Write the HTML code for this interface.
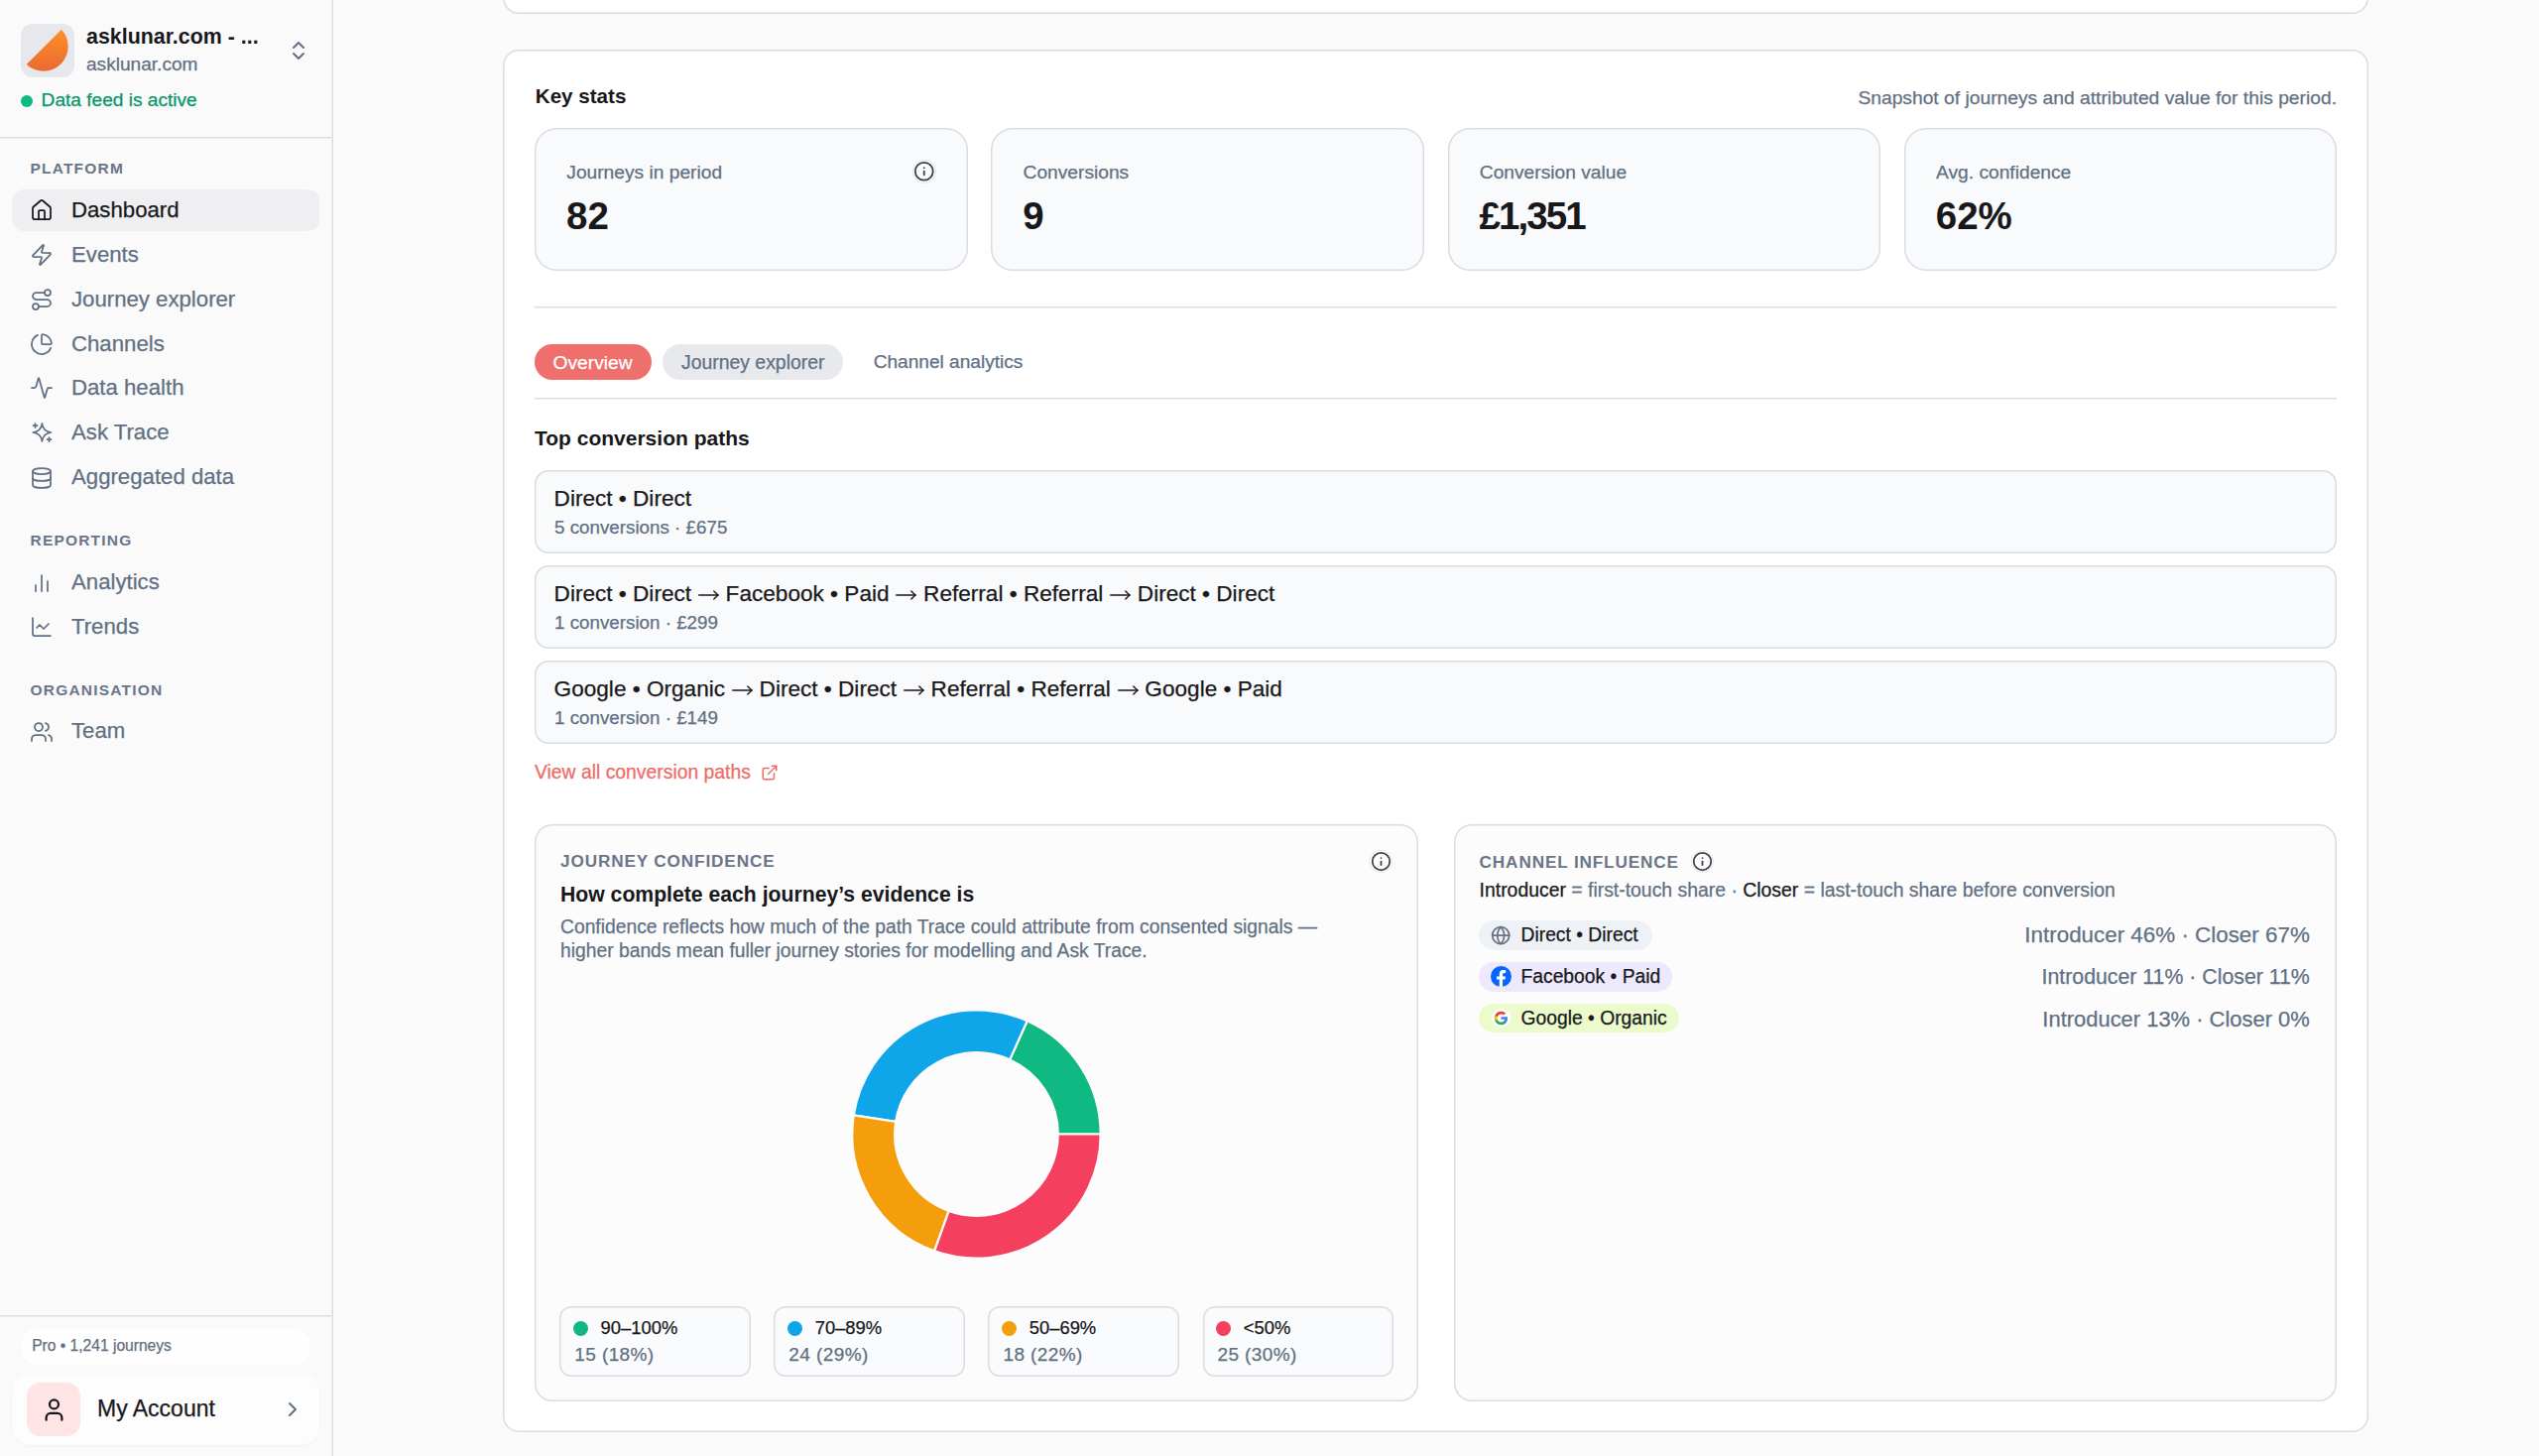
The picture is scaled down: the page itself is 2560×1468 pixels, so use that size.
<!DOCTYPE html>
<html><head><meta charset="utf-8"><title>Dashboard</title>
<style>
html,body{margin:0;padding:0;}
body{width:2560px;height:1468px;overflow:hidden;position:relative;background:#fafafa;font-family:"Liberation Sans",sans-serif;}
.t{position:absolute;white-space:nowrap;-webkit-text-stroke:0.25px currentColor;}
.t.bd{-webkit-text-stroke:0;}
.b{position:absolute;box-sizing:border-box;}
.i{position:absolute;overflow:visible;}
</style></head><body>
<div class="b" style="left:0px;top:0px;width:335.5px;height:1468px;background:#fafafa;box-shadow:inset -1.5px 0 0 0 #d9dde2;"></div>
<div class="b" style="left:21px;top:24px;width:54px;height:54px;background:#e7e8ec;border-radius:12px;"></div>
<svg class="i" style="left:21px;top:24px" width="54" height="54" viewBox="0 0 54 54"><defs><linearGradient id="lg" x1="0" y1="0" x2="0" y2="1"><stop offset="0" stop-color="#ff8f2b"/><stop offset="1" stop-color="#ea6a30"/></linearGradient></defs><path d="M5.7 40.9 L40.9 5.7 A24.9 24.9 0 0 1 5.7 40.9 Z" fill="url(#lg)"/></svg>
<div class="t bd" style="left:87px;top:25.14px;font-size:21.4px;line-height:25.68px;color:#18181b;font-weight:700;">asklunar.com - ...</div>
<div class="t" style="left:87px;top:54.02px;font-size:19.1px;line-height:22.92px;color:#617083;">asklunar.com</div>
<svg class="i" style="left:289px;top:39px;" width="24" height="24" viewBox="0 0 24 24" fill="none" stroke="#617083" stroke-width="2" stroke-linecap="round" stroke-linejoin="round"><path d="m7 15 5 5 5-5"/><path d="m7 9 5-5 5 5"/></svg>
<div class="b" style="left:21px;top:96px;width:12px;height:12px;background:#10b981;border-radius:50%;"></div>
<div class="t" style="left:41.6px;top:90.22px;font-size:19.1px;line-height:22.92px;color:#059669;">Data feed is active</div>
<div class="b" style="left:0px;top:138px;width:334px;height:6px;box-shadow:inset 0 1.5px 0 0 #d9dde2;"></div>
<div class="t bd" style="left:30.5px;top:161.03px;font-size:15.5px;line-height:18.6px;color:#6a7588;font-weight:700;letter-spacing:1.2px;">PLATFORM</div>
<div class="b" style="left:12px;top:191px;width:310px;height:42px;background:#efeff1;border-radius:12px;"></div>
<svg class="i" style="left:29.5px;top:200.2px;" width="24" height="24" viewBox="0 0 24 24" fill="none" stroke="#18181b" stroke-width="1.75" stroke-linecap="round" stroke-linejoin="round"><path d="M15 21v-8a1 1 0 0 0-1-1h-4a1 1 0 0 0-1 1v8"/><path d="M3 10a2 2 0 0 1 .709-1.528l7-5.999a2 2 0 0 1 2.582 0l7 5.999A2 2 0 0 1 21 10v9a2 2 0 0 1-2 2H5a2 2 0 0 1-2-2z"/></svg>
<div class="t" style="left:72px;top:199.19px;font-size:22.2px;line-height:26.64px;color:#18181b;">Dashboard</div>
<svg class="i" style="left:29.5px;top:245.2px;" width="24" height="24" viewBox="0 0 24 24" fill="none" stroke="#617083" stroke-width="1.75" stroke-linecap="round" stroke-linejoin="round"><path d="M4 14a1 1 0 0 1-.78-1.63l9.9-10.2a.5.5 0 0 1 .86.46l-1.92 6.02A1 1 0 0 0 13 10h7a1 1 0 0 1 .78 1.63l-9.9 10.2a.5.5 0 0 1-.86-.46l1.92-6.02A1 1 0 0 0 11 14z"/></svg>
<div class="t" style="left:72px;top:244.19px;font-size:22.2px;line-height:26.64px;color:#617083;">Events</div>
<svg class="i" style="left:29.5px;top:289.7px;" width="24" height="24" viewBox="0 0 24 24" fill="none" stroke="#617083" stroke-width="1.75" stroke-linecap="round" stroke-linejoin="round"><circle cx="6" cy="19" r="3"/><path d="M9 19h8.5a3.5 3.5 0 0 0 0-7h-11a3.5 3.5 0 0 1 0-7H15"/><circle cx="18" cy="5" r="3"/></svg>
<div class="t" style="left:72px;top:288.69px;font-size:22.2px;line-height:26.64px;color:#617083;">Journey explorer</div>
<svg class="i" style="left:29.5px;top:334.9px;" width="24" height="24" viewBox="0 0 24 24" fill="none" stroke="#617083" stroke-width="1.75" stroke-linecap="round" stroke-linejoin="round"><path d="M21 12c.552 0 1.005-.449.95-.998a10 10 0 0 0-8.953-8.951c-.55-.055-.998.398-.998.95v8a1 1 0 0 0 1 1z"/><path d="M21.21 15.89A10 10 0 1 1 8 2.83"/></svg>
<div class="t" style="left:72px;top:333.89px;font-size:22.2px;line-height:26.64px;color:#617083;">Channels</div>
<svg class="i" style="left:29.5px;top:379.4px;" width="24" height="24" viewBox="0 0 24 24" fill="none" stroke="#617083" stroke-width="1.75" stroke-linecap="round" stroke-linejoin="round"><path d="M22 12h-2.48a2 2 0 0 0-1.93 1.46l-2.35 8.36a.25.25 0 0 1-.48 0L9.24 2.18a.25.25 0 0 0-.48 0l-2.35 8.36A2 2 0 0 1 4.49 12H2"/></svg>
<div class="t" style="left:72px;top:378.39px;font-size:22.2px;line-height:26.64px;color:#617083;">Data health</div>
<svg class="i" style="left:29.5px;top:424.3px;" width="24" height="24" viewBox="0 0 24 24" fill="none" stroke="#617083" stroke-width="1.75" stroke-linecap="round" stroke-linejoin="round"><path d="M12.4 3 C13.1 8.6 15.6 11.2 21.4 12 C15.6 12.8 13.1 15.4 12.4 21 C11.7 15.4 9.2 12.8 3.3 12 C9.2 11.2 11.7 8.6 12.4 3 Z"/><path d="M5.5 3.1v4"/><path d="M3.5 5.1h4"/><path d="M19.5 17v4"/><path d="M17.5 19h4"/></svg>
<div class="t" style="left:72px;top:423.29px;font-size:22.2px;line-height:26.64px;color:#617083;">Ask Trace</div>
<svg class="i" style="left:29.5px;top:469.5px;" width="24" height="24" viewBox="0 0 24 24" fill="none" stroke="#617083" stroke-width="1.75" stroke-linecap="round" stroke-linejoin="round"><ellipse cx="12" cy="5" rx="9" ry="3"/><path d="M3 5V19A9 3 0 0 0 21 19V5"/><path d="M3 12A9 3 0 0 0 21 12"/></svg>
<div class="t" style="left:72px;top:468.49px;font-size:22.2px;line-height:26.64px;color:#617083;">Aggregated data</div>
<div class="t bd" style="left:30.5px;top:536.13px;font-size:15.5px;line-height:18.6px;color:#6a7588;font-weight:700;letter-spacing:1.2px;">REPORTING</div>
<svg class="i" style="left:29.5px;top:575.5px;" width="24" height="24" viewBox="0 0 24 24" fill="none" stroke="#617083" stroke-width="1.75" stroke-linecap="round" stroke-linejoin="round"><line x1="18" x2="18" y1="20" y2="10"/><line x1="12" x2="12" y1="20" y2="4"/><line x1="6" x2="6" y1="20" y2="14"/></svg>
<div class="t" style="left:72px;top:574.49px;font-size:22.2px;line-height:26.64px;color:#617083;">Analytics</div>
<svg class="i" style="left:29.5px;top:619.6px;" width="24" height="24" viewBox="0 0 24 24" fill="none" stroke="#617083" stroke-width="1.75" stroke-linecap="round" stroke-linejoin="round"><path d="M3 3v16a2 2 0 0 0 2 2h16"/><path d="m19 9-5 5-4-4-3 3"/></svg>
<div class="t" style="left:72px;top:618.59px;font-size:22.2px;line-height:26.64px;color:#617083;">Trends</div>
<div class="t bd" style="left:30.5px;top:686.93px;font-size:15.5px;line-height:18.6px;color:#6a7588;font-weight:700;letter-spacing:1.2px;">ORGANISATION</div>
<svg class="i" style="left:29.5px;top:725.5px;" width="24" height="24" viewBox="0 0 24 24" fill="none" stroke="#617083" stroke-width="1.75" stroke-linecap="round" stroke-linejoin="round"><path d="M16 21v-2a4 4 0 0 0-4-4H6a4 4 0 0 0-4 4v2"/><circle cx="9" cy="7" r="4"/><path d="M22 21v-2a4 4 0 0 0-3-3.87"/><path d="M16 3.13a4 4 0 0 1 0 7.75"/></svg>
<div class="t" style="left:72px;top:724.49px;font-size:22.2px;line-height:26.64px;color:#617083;">Team</div>
<div class="b" style="left:0px;top:1326px;width:334px;height:6px;box-shadow:inset 0 1.5px 0 0 #d9dde2;"></div>
<div class="b" style="left:21px;top:1339px;width:292px;height:37px;background:#fefefe;border-radius:16px;box-shadow:0 0 2px rgba(0,0,0,0.03);"></div>
<div class="t" style="left:32.2px;top:1347.93px;font-size:15.6px;line-height:18.72px;color:#617083;">Pro • 1,241 journeys</div>
<div class="b" style="left:12px;top:1385px;width:310px;height:72px;background:#fdfdfd;border-radius:18px;box-shadow:0 1px 3px rgba(0,0,0,0.04);"></div>
<div class="b" style="left:27px;top:1394px;width:54px;height:54px;background:#ffe4e6;border-radius:14px;"></div>
<svg class="i" style="left:40.5px;top:1407.5px;" width="27" height="27" viewBox="0 0 24 24" fill="none" stroke="#18181b" stroke-width="2" stroke-linecap="round" stroke-linejoin="round"><path d="M19 21v-2a4 4 0 0 0-4-4H9a4 4 0 0 0-4 4v2"/><circle cx="12" cy="7" r="4"/></svg>
<div class="t" style="left:98px;top:1407.23px;font-size:23px;line-height:27.6px;color:#18181b;">My Account</div>
<svg class="i" style="left:283px;top:1409px;" width="24" height="24" viewBox="0 0 24 24" fill="none" stroke="#617083" stroke-width="2" stroke-linecap="round" stroke-linejoin="round"><path d="m9 18 6-6-6-6"/></svg>
<div class="b" style="left:507px;top:-40px;width:1881px;height:54px;background:#fff;box-shadow:inset 0 0 0 1.5px #d9dde2;border-radius:16px;"></div>
<div class="b" style="left:507px;top:50px;width:1881px;height:1394px;background:#fff;box-shadow:inset 0 0 0 1.5px #d9dde2;border-radius:16px;"></div>
<div class="t bd" style="left:539.8px;top:85.20px;font-size:20.6px;line-height:24.72px;color:#18181b;font-weight:700;">Key stats</div>
<div class="t" style="right:204px;top:86.77px;font-size:19.26px;line-height:23.112px;color:#617083;">Snapshot of journeys and attributed value for this period.</div>
<div class="b" style="left:539.0px;top:129px;width:436.5px;height:144px;background:#f9fafb;box-shadow:inset 0 0 0 1.5px #d9dde2;border-radius:22px;"></div>
<div class="t" style="left:571.3px;top:161.53px;font-size:19.2px;line-height:23.04px;color:#617083;">Journeys in period</div>
<div class="t bd" style="left:571.0px;top:194.96px;font-size:38.5px;line-height:46.2px;color:#18181b;font-weight:700;">82</div>
<div class="b" style="left:999.25px;top:129px;width:436.5px;height:144px;background:#f9fafb;box-shadow:inset 0 0 0 1.5px #d9dde2;border-radius:22px;"></div>
<div class="t" style="left:1031.55px;top:161.53px;font-size:19.2px;line-height:23.04px;color:#617083;">Conversions</div>
<div class="t bd" style="left:1031.25px;top:194.96px;font-size:38.5px;line-height:46.2px;color:#18181b;font-weight:700;">9</div>
<div class="b" style="left:1459.5px;top:129px;width:436.5px;height:144px;background:#f9fafb;box-shadow:inset 0 0 0 1.5px #d9dde2;border-radius:22px;"></div>
<div class="t" style="left:1491.8px;top:161.53px;font-size:19.2px;line-height:23.04px;color:#617083;">Conversion value</div>
<div class="t bd" style="left:1491.5px;top:194.96px;font-size:38.5px;line-height:46.2px;color:#18181b;font-weight:700;letter-spacing:-1.9px;">£1,351</div>
<div class="b" style="left:1919.75px;top:129px;width:436.5px;height:144px;background:#f9fafb;box-shadow:inset 0 0 0 1.5px #d9dde2;border-radius:22px;"></div>
<div class="t" style="left:1952.05px;top:161.53px;font-size:19.2px;line-height:23.04px;color:#617083;">Avg. confidence</div>
<div class="t bd" style="left:1951.75px;top:194.96px;font-size:38.5px;line-height:46.2px;color:#18181b;font-weight:700;">62%</div>
<div class="b" style="left:920.2px;top:161.2px;width:23.5px;height:23.5px;border-radius:50%;border:1px solid #e4e7eb;"></div>
<svg class="i" style="left:921.2px;top:162.2px;" width="21.5" height="21.5" viewBox="0 0 24 24" fill="none" stroke="#3f3f46" stroke-width="2" stroke-linecap="round" stroke-linejoin="round"><circle cx="12" cy="12" r="10"/><path d="M12 16v-4"/><path d="M12 8h.01"/></svg>
<div class="b" style="left:539px;top:309px;width:1817px;height:6px;box-shadow:inset 0 1.5px 0 0 #d9dde2;"></div>
<div class="b" style="left:539px;top:347px;width:117.5px;height:35.5px;background:#ee6f6c;border-radius:18px;"></div>
<div class="t" style="left:557.6px;top:353.73px;font-size:19.2px;line-height:23.04px;color:#ffffff;">Overview</div>
<div class="b" style="left:668.4px;top:347px;width:181.6px;height:35.5px;background:#e8e9ed;border-radius:18px;"></div>
<div class="t" style="left:687px;top:353.54px;font-size:19.4px;line-height:23.28px;color:#617083;">Journey explorer</div>
<div class="t" style="left:880.7px;top:353.82px;font-size:19.1px;line-height:22.92px;color:#617083;">Channel analytics</div>
<div class="b" style="left:539px;top:401px;width:1817px;height:6px;box-shadow:inset 0 1.5px 0 0 #d9dde2;"></div>
<div class="t bd" style="left:539px;top:429.02px;font-size:21px;line-height:25.2px;color:#18181b;font-weight:700;">Top conversion paths</div>
<div class="b" style="left:539px;top:473.5px;width:1817px;height:84.3px;background:#f9fafb;box-shadow:inset 0 0 0 1.5px #d9dde2;border-radius:14px;"></div>
<div class="t" style="left:558.6px;top:488.51px;font-size:22.6px;line-height:27.12px;color:#18181b;">Direct • Direct</div>
<div class="t" style="left:559px;top:520.91px;font-size:18.8px;line-height:22.56px;color:#617083;">5 conversions · £675</div>
<div class="b" style="left:539px;top:569.5px;width:1817px;height:84.3px;background:#f9fafb;box-shadow:inset 0 0 0 1.5px #d9dde2;border-radius:14px;"></div>
<div class="t" style="left:558.6px;top:584.51px;font-size:22.6px;line-height:27.12px;color:#18181b;">Direct • Direct <svg style="display:inline-block;vertical-align:1px;margin:0 0.5px" width="21" height="10" viewBox="0 0 21 10" fill="none" stroke="#18181b" stroke-width="1.4" stroke-linecap="round" stroke-linejoin="round"><path d="M0.7 5h19.4"/><path d="M15.8 1l4.2 4-4.2 4"/></svg> Facebook • Paid <svg style="display:inline-block;vertical-align:1px;margin:0 0.5px" width="21" height="10" viewBox="0 0 21 10" fill="none" stroke="#18181b" stroke-width="1.4" stroke-linecap="round" stroke-linejoin="round"><path d="M0.7 5h19.4"/><path d="M15.8 1l4.2 4-4.2 4"/></svg> Referral • Referral <svg style="display:inline-block;vertical-align:1px;margin:0 0.5px" width="21" height="10" viewBox="0 0 21 10" fill="none" stroke="#18181b" stroke-width="1.4" stroke-linecap="round" stroke-linejoin="round"><path d="M0.7 5h19.4"/><path d="M15.8 1l4.2 4-4.2 4"/></svg> Direct • Direct</div>
<div class="t" style="left:559px;top:616.91px;font-size:18.8px;line-height:22.56px;color:#617083;">1 conversion · £299</div>
<div class="b" style="left:539px;top:665.5px;width:1817px;height:84.3px;background:#f9fafb;box-shadow:inset 0 0 0 1.5px #d9dde2;border-radius:14px;"></div>
<div class="t" style="left:558.6px;top:680.51px;font-size:22.6px;line-height:27.12px;color:#18181b;">Google • Organic <svg style="display:inline-block;vertical-align:1px;margin:0 0.5px" width="21" height="10" viewBox="0 0 21 10" fill="none" stroke="#18181b" stroke-width="1.4" stroke-linecap="round" stroke-linejoin="round"><path d="M0.7 5h19.4"/><path d="M15.8 1l4.2 4-4.2 4"/></svg> Direct • Direct <svg style="display:inline-block;vertical-align:1px;margin:0 0.5px" width="21" height="10" viewBox="0 0 21 10" fill="none" stroke="#18181b" stroke-width="1.4" stroke-linecap="round" stroke-linejoin="round"><path d="M0.7 5h19.4"/><path d="M15.8 1l4.2 4-4.2 4"/></svg> Referral • Referral <svg style="display:inline-block;vertical-align:1px;margin:0 0.5px" width="21" height="10" viewBox="0 0 21 10" fill="none" stroke="#18181b" stroke-width="1.4" stroke-linecap="round" stroke-linejoin="round"><path d="M0.7 5h19.4"/><path d="M15.8 1l4.2 4-4.2 4"/></svg> Google • Paid</div>
<div class="t" style="left:559px;top:712.91px;font-size:18.8px;line-height:22.56px;color:#617083;">1 conversion · £149</div>
<div class="t" style="left:539px;top:767.19px;font-size:19.35px;line-height:23.22px;color:#ee6b67;">View all conversion paths</div>
<svg class="i" style="left:767px;top:770.3px;" width="18" height="18" viewBox="0 0 24 24" fill="none" stroke="#ee6b67" stroke-width="2" stroke-linecap="round" stroke-linejoin="round"><path d="M15 3h6v6"/><path d="M10 14 21 3"/><path d="M18 13v6a2 2 0 0 1-2 2H5a2 2 0 0 1-2-2V8a2 2 0 0 1 2-2h6"/></svg>
<div class="b" style="left:539px;top:830.5px;width:890.5px;height:582px;background:#fcfcfd;box-shadow:inset 0 0 0 1.5px #d9dde2;border-radius:18px;"></div>
<div class="b" style="left:1465.5px;top:830.5px;width:890.5px;height:582px;background:#fcfcfd;box-shadow:inset 0 0 0 1.5px #d9dde2;border-radius:18px;"></div>
<div class="t bd" style="left:565px;top:858.42px;font-size:17.2px;line-height:20.64px;color:#6a7588;font-weight:700;letter-spacing:0.85px;">JOURNEY CONFIDENCE</div>
<div class="b" style="left:1380.25px;top:856.65px;width:23.5px;height:23.5px;border-radius:50%;border:1px solid #e4e7eb;"></div>
<svg class="i" style="left:1381.5px;top:857.9px;" width="21" height="21" viewBox="0 0 24 24" fill="none" stroke="#3f3f46" stroke-width="2" stroke-linecap="round" stroke-linejoin="round"><circle cx="12" cy="12" r="10"/><path d="M12 16v-4"/><path d="M12 8h.01"/></svg>
<div class="t bd" style="left:565px;top:889.03px;font-size:21.2px;line-height:25.44px;color:#18181b;font-weight:700;">How complete each journey’s evidence is</div>
<div class="t" style="left:565px;top:923.03px;font-size:19.3px;line-height:23.16px;color:#617083;">Confidence reflects how much of the path Trace could attribute from consented signals —</div>
<div class="t" style="left:565px;top:947.03px;font-size:19.3px;line-height:23.16px;color:#617083;">higher bands mean fuller journey stories for modelling and Ask Trace.</div>
<svg class="i" style="left:0;top:0" width="2560" height="1468" viewBox="0 0 2560 1468"><path d="M1109.700 1143.500 A125.2 125.2 0 0 0 1035.715 1029.255 L1018.166 1068.401 A82.3 82.3 0 0 1 1066.800 1143.500 Z" fill="#10b981" stroke="#fcfcfd" stroke-width="2.2" stroke-linejoin="miter"/><path d="M1035.715 1029.255 A125.2 125.2 0 0 0 860.767 1124.388 L903.165 1130.937 A82.3 82.3 0 0 1 1018.166 1068.401 Z" fill="#0ea5e9" stroke="#fcfcfd" stroke-width="2.2" stroke-linejoin="miter"/><path d="M860.767 1124.388 A125.2 125.2 0 0 0 942.180 1261.331 L956.681 1220.956 A82.3 82.3 0 0 1 903.165 1130.937 Z" fill="#f59e0b" stroke="#fcfcfd" stroke-width="2.2" stroke-linejoin="miter"/><path d="M942.180 1261.331 A125.2 125.2 0 0 0 1109.700 1143.500 L1066.800 1143.500 A82.3 82.3 0 0 1 956.681 1220.956 Z" fill="#f43f5e" stroke="#fcfcfd" stroke-width="2.2" stroke-linejoin="miter"/></svg>
<div class="b" style="left:564.3px;top:1317.2px;width:192.7px;height:71px;background:#fafbfc;box-shadow:inset 0 0 0 1.5px #d9dde2;border-radius:12px;"></div>
<div class="b" style="left:578.0px;top:1331.7px;width:15px;height:15px;background:#10b981;border-radius:50%;"></div>
<div class="t" style="left:605.5999999999999px;top:1328.18px;font-size:18.4px;line-height:22.08px;color:#18181b;">90–100%</div>
<div class="t" style="left:579.3px;top:1354.62px;font-size:19px;line-height:22.8px;color:#617083;letter-spacing:0.4px;">15 (18%)</div>
<div class="b" style="left:780.3699999999999px;top:1317.2px;width:192.7px;height:71px;background:#fafbfc;box-shadow:inset 0 0 0 1.5px #d9dde2;border-radius:12px;"></div>
<div class="b" style="left:794.0699999999999px;top:1331.7px;width:15px;height:15px;background:#0ea5e9;border-radius:50%;"></div>
<div class="t" style="left:821.6699999999998px;top:1328.18px;font-size:18.4px;line-height:22.08px;color:#18181b;">70–89%</div>
<div class="t" style="left:795.3699999999999px;top:1354.62px;font-size:19px;line-height:22.8px;color:#617083;letter-spacing:0.4px;">24 (29%)</div>
<div class="b" style="left:996.4399999999999px;top:1317.2px;width:192.7px;height:71px;background:#fafbfc;box-shadow:inset 0 0 0 1.5px #d9dde2;border-radius:12px;"></div>
<div class="b" style="left:1010.14px;top:1331.7px;width:15px;height:15px;background:#f59e0b;border-radius:50%;"></div>
<div class="t" style="left:1037.74px;top:1328.18px;font-size:18.4px;line-height:22.08px;color:#18181b;">50–69%</div>
<div class="t" style="left:1011.4399999999999px;top:1354.62px;font-size:19px;line-height:22.8px;color:#617083;letter-spacing:0.4px;">18 (22%)</div>
<div class="b" style="left:1212.51px;top:1317.2px;width:192.7px;height:71px;background:#fafbfc;box-shadow:inset 0 0 0 1.5px #d9dde2;border-radius:12px;"></div>
<div class="b" style="left:1226.21px;top:1331.7px;width:15px;height:15px;background:#f43f5e;border-radius:50%;"></div>
<div class="t" style="left:1253.81px;top:1328.18px;font-size:18.4px;line-height:22.08px;color:#18181b;">&lt;50%</div>
<div class="t" style="left:1227.51px;top:1354.62px;font-size:19px;line-height:22.8px;color:#617083;letter-spacing:0.4px;">25 (30%)</div>
<div class="t bd" style="left:1491.6px;top:858.52px;font-size:17.2px;line-height:20.64px;color:#6a7588;font-weight:700;letter-spacing:0.85px;">CHANNEL INFLUENCE</div>
<div class="b" style="left:1704.65px;top:856.65px;width:23.5px;height:23.5px;border-radius:50%;border:1px solid #e4e7eb;"></div>
<svg class="i" style="left:1705.9px;top:857.9px;" width="21" height="21" viewBox="0 0 24 24" fill="none" stroke="#3f3f46" stroke-width="2" stroke-linecap="round" stroke-linejoin="round"><circle cx="12" cy="12" r="10"/><path d="M12 16v-4"/><path d="M12 8h.01"/></svg>
<div class="t" style="left:1491.6px;top:885.94px;font-size:19.4px;line-height:23.28px;color:#617083;"><span style="color:#18181b">Introducer</span> = first-touch share · <span style="color:#18181b">Closer</span> = last-touch share before conversion</div>
<div class="b" style="left:1491.3px;top:928.3px;width:174.6px;height:29.4px;background:#eef2f6;border-radius:15px;"></div>
<svg class="i" style="left:1503.3px;top:932.8px;" width="20.4" height="20.4" viewBox="0 0 24 24" fill="none" stroke="#6b7280" stroke-width="2" stroke-linecap="round" stroke-linejoin="round"><circle cx="12" cy="12" r="10"/><path d="M12 2a14.5 14.5 0 0 0 0 20 14.5 14.5 0 0 0 0-20"/><path d="M2 12h20"/></svg>
<div class="t" style="left:1533.5px;top:931.13px;font-size:19.3px;line-height:23.16px;color:#18181b;">Direct • Direct</div>
<div class="t" style="right:231.19999999999982px;top:930.40px;font-size:22.4px;line-height:26.88px;color:#617083;">Introducer 46% · Closer 67%</div>
<div class="b" style="left:1491.3px;top:970.15px;width:194.3px;height:29.4px;background:#ede8fc;border-radius:15px;"></div>
<svg class="i" style="left:1503px;top:974.35px" width="21" height="21" viewBox="0 0 24 24"><circle cx="12" cy="12" r="12" fill="#0866ff"/><path d="M16.6 15.5l.5-3.5h-3.3V9.8c0-1 .5-1.9 2-1.9h1.5V4.9s-1.4-.2-2.7-.2c-2.8 0-4.6 1.7-4.6 4.7V12H6.9v3.5H10V24h3.8v-8.5z" fill="#fff"/></svg>
<div class="t" style="left:1533.5px;top:973.13px;font-size:19.3px;line-height:23.16px;color:#18181b;">Facebook • Paid</div>
<div class="t" style="right:231.19999999999982px;top:973.44px;font-size:21.3px;line-height:25.56px;color:#617083;">Introducer 11% · Closer 11%</div>
<div class="b" style="left:1491.3px;top:1012.0px;width:201.5px;height:29.4px;background:#ebfbcb;border-radius:15px;"></div>
<svg class="i" style="left:1504px;top:1017.20px" width="19" height="19" viewBox="0 0 24 24"><circle cx="12" cy="12" r="12" fill="#fff"/><g transform="translate(12 12) scale(1.33) translate(-12 -12)"><path d="M18.2 12.2c0-.5 0-.9-.1-1.3H12v2.4h3.5c-.2.8-.6 1.5-1.3 2v1.6h2.1c1.2-1.1 1.9-2.8 1.9-4.7z" fill="#4285f4"/><path d="M12 18.5c1.8 0 3.2-.6 4.3-1.6l-2.1-1.6c-.6.4-1.3.6-2.2.6-1.7 0-3.1-1.1-3.6-2.7H6.2v1.7c1.1 2.1 3.3 3.6 5.8 3.6z" fill="#34a853"/><path d="M8.4 13.2c-.1-.4-.2-.8-.2-1.2s.1-.8.2-1.2V9.1H6.2C5.8 10 5.5 11 5.5 12s.3 2 .7 2.9l2.2-1.7z" fill="#fbbc05"/><path d="M12 8.1c1 0 1.8.3 2.5 1l1.9-1.9C15.2 6.1 13.7 5.5 12 5.5c-2.5 0-4.7 1.5-5.8 3.6l2.2 1.7c.5-1.6 1.9-2.7 3.6-2.7z" fill="#ea4335"/></g></svg>
<div class="t" style="left:1533.5px;top:1015.13px;font-size:19.3px;line-height:23.16px;color:#18181b;">Google • Organic</div>
<div class="t" style="right:231.19999999999982px;top:1014.82px;font-size:21.95px;line-height:26.34px;color:#617083;">Introducer 13% · Closer 0%</div>
</body></html>
